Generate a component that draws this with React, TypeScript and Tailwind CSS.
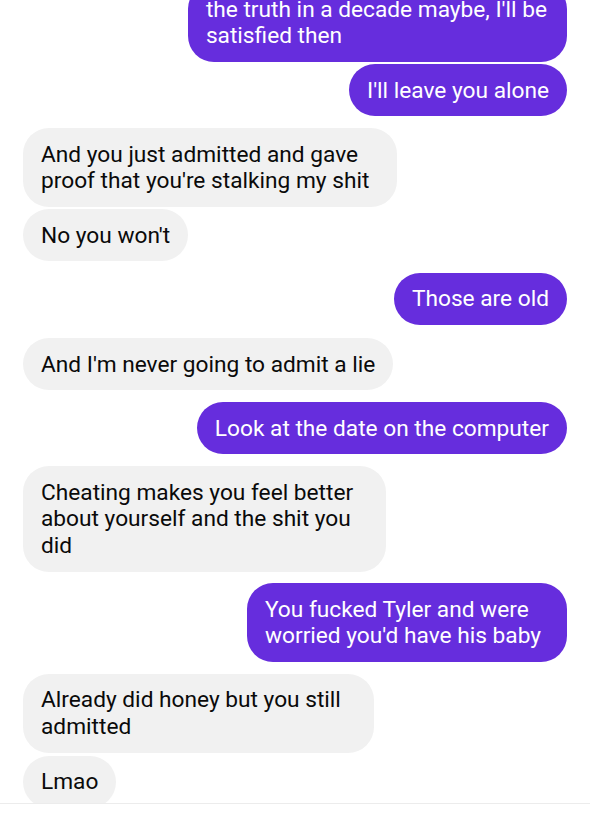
type Msg = { me: boolean; lines: string[]; cls: string }

const messages: Msg[] = [
  { me: true, lines: ["the truth in a decade maybe, I'll be", "satisfied then"], cls: "-mt-[16.7px] pr-[20px]" },
  { me: true, lines: ["I'll leave you alone"], cls: "mt-[2px] pr-[18px]" },
  { me: false, lines: ["And you just admitted and gave", "proof that you're stalking my shit"], cls: "mt-[12px] pr-[28px]" },
  { me: false, lines: ["No you won't"], cls: "mt-[2.5px] pr-[18px]" },
  { me: true, lines: ["Those are old"], cls: "mt-[11.6px] pr-[18px]" },
  { me: false, lines: ["And I'm never going to admit a lie"], cls: "mt-[13px] pr-[18px]" },
  { me: true, lines: ["Look at the date on the computer"], cls: "mt-[12px] pr-[18px]" },
  { me: false, lines: ["Cheating makes you feel better", "about yourself and the shit you", "did"], cls: "mt-[12px] pr-[33px]" },
  { me: true, lines: ["You fucked Tyler and were", "worried you'd have his baby"], cls: "mt-[11.5px] pr-[26px]" },
  { me: false, lines: ["Already did honey but you still", "admitted"], cls: "mt-[12.2px] pr-[33px]" },
  { me: false, lines: ["Lmao"], cls: "mt-[3.3px] pr-[18px]" },
]

function Bubble({ m }: { m: Msg }) {
  const [margin, padRight] = m.cls.split(" ")
  return (
    <div className={`flex ${m.me ? "justify-end" : "justify-start"} ${margin}`}>
      <div
        className={`${m.me ? "bg-[#662ddd] text-white" : "bg-[#f1f1f1] text-[#0a0a0a]"} rounded-[26px] pl-[18px] ${padRight} pt-[13.5px] pb-[12px] text-[22.7px] leading-[26.6px] whitespace-nowrap`}
      >
        {m.lines.map((l, j) => (
          <div key={j}>{l}</div>
        ))}
      </div>
    </div>
  )
}

export default function App() {
  return (
    <div className="w-[590px] h-[820px] bg-white flex flex-col overflow-hidden" style={{ fontFamily: "Roboto, 'Noto Sans', sans-serif" }}>
      <div className="h-[803px] overflow-hidden px-[23px]">
        <div className="flex flex-col">
          {messages.map((m, i) => (
            <Bubble key={i} m={m} />
          ))}
        </div>
      </div>
      <div className="flex-1 border-t border-[#ececec] bg-white" />
    </div>
  )
}
